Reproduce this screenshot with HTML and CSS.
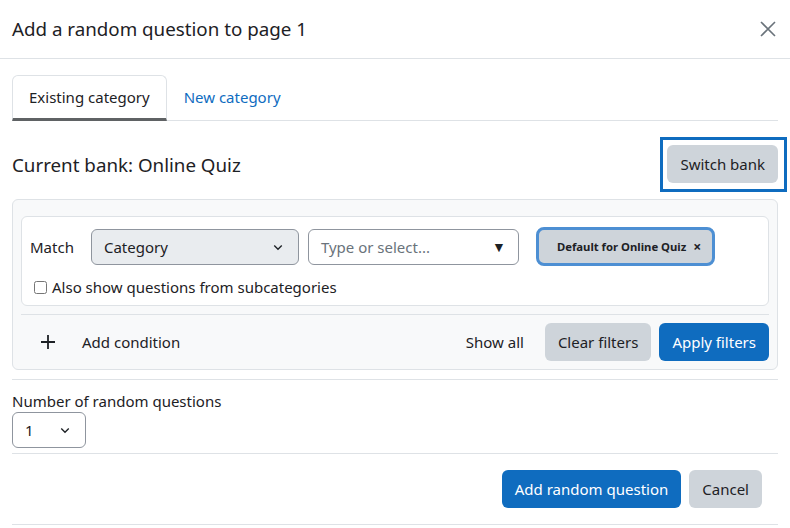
FILE: index.html
```html
<!DOCTYPE html>
<html lang="en">

<head>
  <meta charset="UTF-8">
  <meta name="viewport" content="width=device-width, initial-scale=1.0">
  <title>Add a random question</title>
  <link rel="stylesheet" href="styles.css">
</head>

<body>
  <div class="modal">
    <div class="modal-header">
      <h5 class="modal-title">Add a random question to page 1</h5>
      <button class="close" type="button" aria-label="Close">
        <svg width="16" height="16" viewBox="0 0 16 16"><path d="M1 1L15 15M15 1L1 15" stroke="#6a737b" stroke-width="1.6" fill="none"/></svg>
      </button>
    </div>

    <div class="modal-body">
      <ul class="nav-tabs">
        <li class="nav-link active">Existing category</li>
        <li class="nav-link">New category</li>
      </ul>

      <div class="bank-row">
        <h4 class="bank-title">Current bank: Online Quiz</h4>
        <div class="focus-ring">
          <button class="btn btn-secondary" type="button">Switch bank</button>
        </div>
      </div>

      <div class="filters">
        <div class="condition">
          <div class="condition-row">
            <span class="match-label">Match</span>
            <div class="select select-category">
              <span>Category</span>
              <svg width="12" height="12" viewBox="0 0 16 16"><path d="M3 6l5 5 5-5" stroke="#1d2125" stroke-width="1.8" fill="none"/></svg>
            </div>
            <div class="autocomplete">
              <span class="placeholder">Type or select...</span>
              <span class="down-arrow">&#9660;</span>
            </div>
            <span class="tag">Default for Online Quiz <span class="tag-x">&times;</span></span>
          </div>
          <label class="check-row">
            <input type="checkbox">
            <span>Also show questions from subcategories</span>
          </label>
        </div>

        <div class="filter-footer">
          <button class="btn btn-link add-condition" type="button">
            <svg width="14" height="14" viewBox="0 0 14 14"><path d="M7 0V14M0 7H14" stroke="#1d2125" stroke-width="1.8"/></svg>
            <span>Add condition</span>
          </button>
          <div class="filter-actions">
            <button class="btn btn-link" type="button">Show all</button>
            <button class="btn btn-secondary" type="button">Clear filters</button>
            <button class="btn btn-primary" type="button">Apply filters</button>
          </div>
        </div>
      </div>

      <div class="number-row">
        <label class="number-label">Number of random questions</label>
        <div class="select select-number">
          <span>1</span>
          <svg width="12" height="12" viewBox="0 0 16 16"><path d="M3 6l5 5 5-5" stroke="#1d2125" stroke-width="1.8" fill="none"/></svg>
        </div>
      </div>

      <div class="modal-footer">
        <button class="btn btn-primary" type="button">Add random question</button>
        <button class="btn btn-secondary" type="button">Cancel</button>
      </div>
    </div>
  </div>
</body>

</html>
```

FILE: styles.css
```css
body {
  margin: 0;
  background-color: #fff;
  color: #1d2125;
  font-family: "Noto Sans", "Open Sans", sans-serif;
  font-size: 15px;
}

.modal-header {
  display: flex;
  align-items: center;
  justify-content: space-between;
  height: 58px;
  padding: 0 12px;
  border-bottom: 1px solid #dee2e6;
}

.modal-title {
  margin: 0 0 2px;
  font-size: 18.75px;
  font-weight: 400;
}

.close {
  border: none;
  background: none;
  padding: 0;
  margin-right: 2px;
  display: flex;
}

.modal-body {
  padding: 0 12px;
}

/* Pestañas */
.nav-tabs {
  list-style: none;
  display: flex;
  margin: 16px 0 0;
  padding: 0;
  border-bottom: 1px solid #dee2e6;
}

.nav-link {
  height: 42px;
  line-height: 42px;
  padding: 0 16px;
  margin-bottom: -1px;
  color: #0f6cbf;
  border: 1px solid transparent;
  border-bottom: 3px solid transparent;
  border-radius: 6px 6px 0 0;
}

.nav-link.active {
  color: #1d2125;
  border-color: #dee2e6;
  border-bottom-color: #5f6264;
}

.bank-row {
  display: flex;
  align-items: center;
  justify-content: space-between;
  margin-top: 16px;
}

.bank-title {
  margin: 0;
  font-size: 18.75px;
  font-weight: 400;
}

/* Recuadro de foco del botón */
.focus-ring {
  display: flex;
  padding: 5px 6px 6px 4px;
  margin-right: -9px;
  border: 3px solid #0f6cbf;
}

/* Botones */
.btn {
  font-family: inherit;
  font-size: 15px;
  color: #1d2125;
  border: 1px solid transparent;
  border-radius: 6px;
  padding: 0 12px;
  height: 38px;
  cursor: pointer;
}

.btn-secondary {
  background-color: #ced4da;
}

.btn-primary {
  background-color: #0f6cbf;
  color: #fff;
}

.btn-link {
  background: none;
}

/* Filtros */
.filters {
  margin-top: 7px;
  padding: 16px 8px 8px;
  background-color: #f8f9fa;
  border: 1px solid #dee2e6;
  border-radius: 6px;
}

.condition {
  background-color: #fff;
  border: 1px solid #dee2e6;
  border-radius: 6px;
  padding: 10px 8px 8px;
}

.condition-row {
  display: flex;
  align-items: center;
}

.match-label {
  margin-right: 17px;
}

.select {
  display: flex;
  align-items: center;
  justify-content: space-between;
  box-sizing: border-box;
  height: 36px;
  padding: 0 14px 0 12px;
  border: 1px solid #8f959e;
  border-radius: 6px;
}

.select-category {
  width: 208px;
  background-color: #e9ecef;
}

.autocomplete {
  display: flex;
  align-items: center;
  justify-content: space-between;
  box-sizing: border-box;
  width: 211px;
  height: 36px;
  margin-left: 9px;
  padding: 0 12px;
  border: 1px solid #8f959e;
  border-radius: 6px;
}

.placeholder {
  color: #6a737b;
}

.down-arrow {
  font-size: 14px;
  color: #1d2125;
}

.tag {
  display: flex;
  align-items: center;
  box-sizing: border-box;
  height: 39px;
  margin-left: 17px;
  padding: 0 11px 0 18px;
  background-color: #ced4da;
  border: 3px solid #4d8fd3;
  border-radius: 8px;
  font-size: 11.3px;
  font-weight: 700;
}

.tag-x {
  margin-left: 7px;
  font-size: 14px;
}

.check-row {
  display: flex;
  align-items: center;
  margin-top: 11px;
  margin-left: 2px;
}

.check-row input {
  margin: 0 5px 0 2px;
  width: 13px;
  height: 13px;
}

.filter-footer {
  display: flex;
  align-items: center;
  justify-content: space-between;
  margin-top: 8px;
  padding-top: 8px;
  border-top: 1px solid #dee2e6;
}

.add-condition {
  display: flex;
  align-items: center;
  padding-left: 19px;
}

.add-condition span {
  margin-left: 27px;
}

.filter-actions {
  display: flex;
  gap: 8px;
}

/* Número de preguntas */
.number-row {
  margin-top: 9px;
  padding: 11px 0 5px;
  border-top: 1px solid #dee2e6;
  border-bottom: 1px solid #dee2e6;
}

.number-label {
  display: block;
  margin-bottom: 1px;
}

.select-number {
  width: 74px;
}

.modal-footer {
  display: flex;
  justify-content: flex-end;
  gap: 8px;
  padding: 16px 16px 16px;
  border-bottom: 1px solid #dee2e6;
}
```
